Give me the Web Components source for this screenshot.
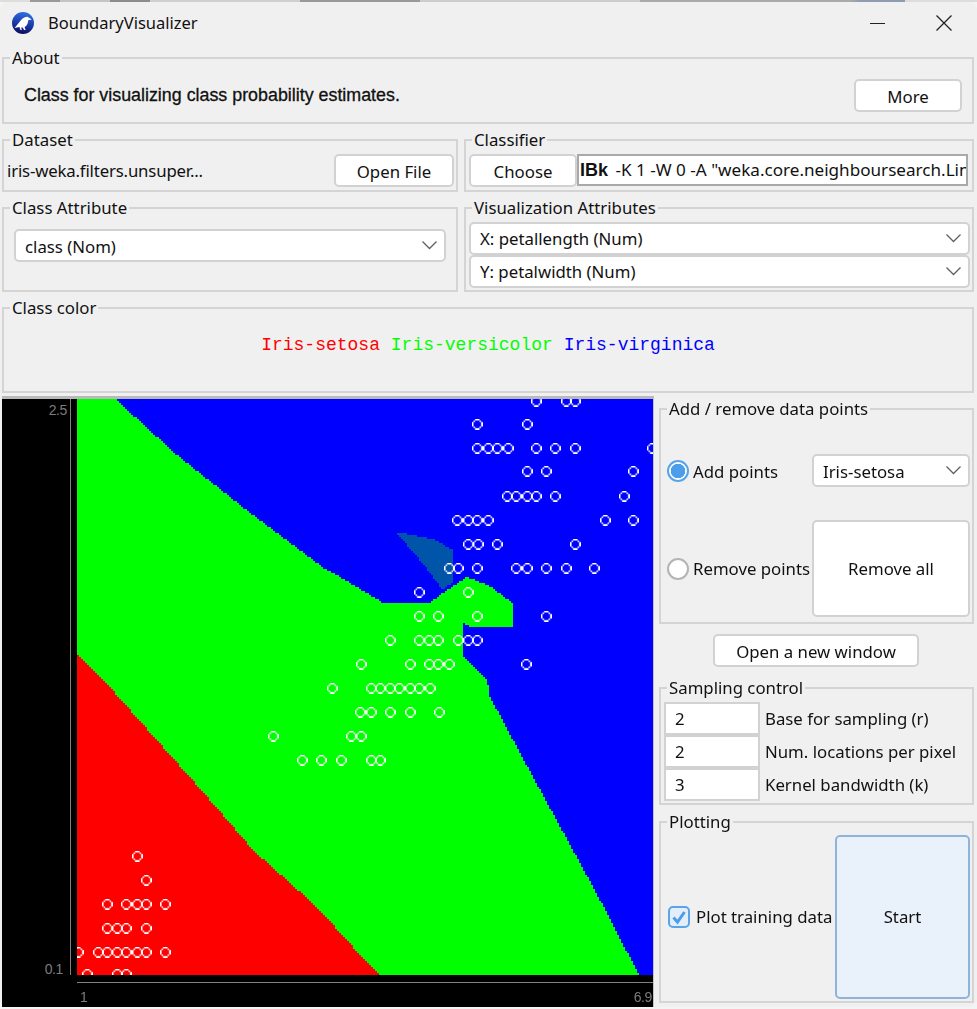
<!DOCTYPE html>
<html>
<head>
<meta charset="utf-8">
<title>BoundaryVisualizer</title>
<style>
html, body { margin: 0; background: #f4f4f4; }
body { width: 977px; height: 1009px; overflow: hidden; }
</style>
</head>
<body>
<boundary-visualizer></boundary-visualizer>
<script>
'use strict'

const chevron = `<svg width="15" height="9" viewBox="0 0 15 9"><polyline points="0.5,0.5 7.5,7.5 14.5,0.5" fill="none" stroke="#606060" stroke-width="1.3"/></svg>`

class WGroup extends HTMLElement {
  constructor() {
    super()
    this.attachShadow({mode: 'open'}).innerHTML = `
<style>
:host { display: block; box-sizing: border-box; }
fieldset { box-sizing: border-box; height: 100%; min-width: 0; margin: 0; padding: 0; border: 2px solid #d4d4d4; }
legend { margin-left: 6px; padding: 0 2px; line-height: 20px; height: 20px; color: #111; }
.b { box-sizing: border-box; padding: var(--p, 0); }
</style>
<fieldset><legend></legend><div class="b"><slot></slot></div></fieldset>`
    this.shadowRoot.querySelector('legend').textContent = this.getAttribute('label')
  }
}
customElements.define('w-group', WGroup)

class WButton extends HTMLElement {
  constructor() {
    super()
    this.attachShadow({mode: 'open'}).innerHTML = `
<style>
:host { display: flex; box-sizing: border-box; align-items: center; justify-content: center; height: 33px; padding-top: 2px;
  background: #fff; border: 2px solid #d2d2d2; border-radius: 5px; color: #111; white-space: nowrap; }
:host([active]) { background: #e9f1fa; border-color: #8fb4da; }
</style><slot></slot>`
  }
}
customElements.define('w-button', WButton)

class WCombo extends HTMLElement {
  constructor() {
    super()
    this.attachShadow({mode: 'open'}).innerHTML = `
<style>
:host { display: flex; box-sizing: border-box; align-items: center; justify-content: space-between; height: 33px;
  padding: 0 7px 0 9px; background: #fff; border: 2px solid #d2d2d2; border-radius: 5px; color: #111; white-space: nowrap; }
svg { display: block; }
span { position: relative; top: var(--nudge, 0); }
</style><span><slot></slot></span>${chevron}`
  }
}
customElements.define('w-combo', WCombo)

class WRadio extends HTMLElement {
  constructor() {
    super()
    this.attachShadow({mode: 'open'}).innerHTML = `
<style>
:host { display: flex; align-items: center; gap: 4px; color: #111; white-space: nowrap; }
i { box-sizing: border-box; width: 22px; height: 22px; border-radius: 50%; background: #fff; border: 2px solid #b4b4b4; flex: none; }
:host([checked]) i { border-color: #56a3ea; background: radial-gradient(circle, #4c9eea 0 7px, #fff 7.5px); }
:host([checked]) span { position: relative; top: 1px; }
</style><i></i><span><slot></slot></span>`
  }
}
customElements.define('w-radio', WRadio)

class WCheck extends HTMLElement {
  constructor() {
    super()
    this.attachShadow({mode: 'open'}).innerHTML = `
<style>
:host { display: flex; align-items: center; gap: 6px; color: #111; white-space: nowrap; }
svg { display: block; flex: none; }
</style>
<svg width="22" height="22" viewBox="0 0 22 22"><rect x="1" y="1" width="20" height="20" rx="4" fill="#e4eef9" stroke="#5ba4ea" stroke-width="2"/><polyline points="5.5,11.5 9.5,16 16.5,6" fill="none" stroke="#4c9eea" stroke-width="3"/></svg>
<span><slot></slot></span>`
  }
}
customElements.define('w-check', WCheck)

class WField extends HTMLElement {
  constructor() {
    super()
    this.attachShadow({mode: 'open'}).innerHTML = `
<style>
:host { display: flex; box-sizing: border-box; align-items: center; height: 33px; padding-left: 9px;
  background: #fff; border: 2px solid #d2d2d2; color: #111; }
</style><slot></slot>`
  }
}
customElements.define('w-field', WField)

class TitleBar extends HTMLElement {
  constructor() {
    super()
    this.attachShadow({mode: 'open'}).innerHTML = `
<style>
:host { display: flex; align-items: center; height: 42px; padding: 0 25px 0 12px; color: #111; }
svg { display: block; flex: none; }
.t { margin-left: 14px; font-size: 16.5px; }
.min { margin-left: auto; }
.x { margin-left: 51px; }
</style>
<svg width="22" height="22" viewBox="0 0 22 22">
  <defs><linearGradient id="g" x1="0.6" y1="0" x2="0.4" y2="1"><stop offset="0" stop-color="#2f6fe0"/><stop offset=".55" stop-color="#1a3aa8"/><stop offset="1" stop-color="#0b0b5c"/></linearGradient></defs>
  <circle cx="11" cy="11" r="11" fill="url(#g)"/>
  <path d="M2.5 16 L7.5 10 C9.5 7 12.5 4.5 15.5 4.8 L19.8 7.6 L16.2 8.2 C16.3 11 14.8 14 12.6 15 L13.6 18 L12.2 18 L10.6 15.6 L9.2 15.6 L9.8 18 L8.5 18 L7.4 15 Z" fill="#fff"/>
</svg>
<span class="t"><slot></slot></span>
<svg class="min" width="15" height="15" viewBox="0 0 15 15"><line x1="0" y1="7.5" x2="15" y2="7.5" stroke="#222" stroke-width="1"/></svg>
<svg class="x" width="16" height="16" viewBox="0 0 16 16"><path d="M.5 .5 L15.5 15.5 M15.5 .5 L.5 15.5" stroke="#222" stroke-width="1.3" fill="none"/></svg>`
  }
}
customElements.define('title-bar', TitleBar)

// plot data as read from the window, in screen pixels
const rows = [
  [401, [536, 566, 575]],
  [424, [477, 527]],
  [448, [477, 488, 497, 508, 536, 555, 575, 652]],
  [471, [527, 546, 633]],
  [496, [507, 516, 527, 536, 555, 624]],
  [520, [457, 468, 477, 488, 605, 633]],
  [544, [468, 478, 497, 575]],
  [568, [449, 458, 477, 516, 527, 546, 566, 594]],
  [592, [419, 468]],
  [616, [419, 438, 477, 546]],
  [640, [390, 419, 429, 438, 458, 468, 477]],
  [664, [361, 410, 429, 438, 449, 526]],
  [688, [332, 371, 380, 390, 399, 410, 419, 430]],
  [712, [360, 371, 390, 410, 439]],
  [736, [273, 351, 361]],
  [760, [302, 321, 341, 371, 380]],
  [856, [137]],
  [880, [146]],
  [904, [107, 126, 137, 146, 165]],
  [928, [107, 117, 126, 146]],
  [952, [78, 98, 107, 117, 126, 137, 146, 165]],
  [974, [87, 117, 126]]
]
const greenArea = [[77,399],[115,399],[177,455],[240,505],[322,567],[340,577],[383,603],[430,603],[440,595],[467,577],[490,586],[512,603],[513,627],[472,627],[463,623],[463,657],[487,680],[490,697],[520,753],[600,900],[639,975],[77,975]]
const redArea = [[77,653],[115,693],[210,800],[253,850],[317,907],[353,947],[379,975],[77,975]]
const patch = [[396,532],[433,539],[453,550],[453,582],[443,590],[420,560]]
const ring = ['..XXX..', '.X...X.', 'X.....X', 'X.....X', 'X.....X', '.X...X.', '..XXX..']

const inside = (pts, x, y) => {
  let hit = false
  for (let i = 0, j = pts.length - 1; i < pts.length; j = i++) {
    const [xi, yi] = pts[i], [xj, yj] = pts[j]
    if ((yi > y) !== (yj > y) && x < (xj - xi) * (y - yi) / (yj - yi) + xi) hit = !hit
  }
  return hit
}

class BoundaryPlot extends HTMLElement {
  constructor() {
    super()
    this.attachShadow({mode: 'open'}).innerHTML = `
<style>
:host { display: grid; box-sizing: border-box; grid-template-columns: 68px 1px 6px 576px; grid-template-rows: 576px 1fr;
  background: #000; border-top: 3px solid #b9b9b9; border-right: 1px solid #c4c4c4; color: #7c7c7c;
  font: 14px/14px "Liberation Sans", sans-serif; letter-spacing: -.4px; }
.y { display: flex; flex-direction: column; justify-content: space-between; text-align: right; padding: 4px 3px 0 0; }
.y span:last-child { padding-right: 4px; margin-bottom: -1px; }
.line { background: #828282; }
canvas { display: block; width: 576px; height: 576px; }
.axis { grid-column: 4; padding-top: 7px; }
.hl { height: 1px; background: #828282; }
.lab { display: flex; justify-content: space-between; padding: 7px 1px 0 3px; }
</style>
<div class="y"><span>2.5</span><span>0.1</span></div>
<div class="line"></div>
<div></div>
<canvas width="576" height="576"></canvas>
<div class="axis"><div class="hl"></div><div class="lab"><span>1</span><span>6.9</span></div></div>`
  }
  connectedCallback() {
    const c = this.shadowRoot.querySelector('canvas').getContext('2d')
    // crisp blocks for the regions, 2 screen px each
    for (let i = 0; i < 288; i++) {
      for (let j = 0; j < 288; j++) {
        const sx = 77 + (i + .5) * 2, sy = 399 + (j + .5) * 2
        let col = '#0000ff'
        if (inside(redArea, sx, sy)) col = '#ff0000'
        else if (inside(greenArea, sx, sy)) col = '#00ff00'
        else if (inside(patch, sx, sy)) col = '#0055a8'
        c.fillStyle = col
        c.fillRect(i * 2, j * 2, 2, 2)
      }
    }
    // one ring sprite, scaled up with smoothing like the 150% window
    const sprite = document.createElement('canvas')
    sprite.width = sprite.height = 7
    const s = sprite.getContext('2d')
    s.fillStyle = '#fff'
    ring.forEach((r, dy) => {
      for (let dx = 0; dx < 7; dx++) {
        if (r[dx] === 'X') s.fillRect(dx, dy, 1, 1)
      }
    })
    c.imageSmoothingEnabled = true
    for (const [y, xs] of rows) {
      for (const x of xs) {
        c.drawImage(sprite, x - 77 - 5, y - 399 - 5, 10.5, 10.5)
      }
    }
  }
}
customElements.define('boundary-plot', BoundaryPlot)

const appTemplate = document.createElement('template')
appTemplate.innerHTML = /*html*/`
<style>
:host { display: block; width: 977px; height: 1009px; font: 16.8px/24px "Noto Sans", sans-serif; color: #111;
  background: linear-gradient(90deg, #ddd 0 30px, #9a9a9a 30px 60px, #c4c4c4 60px 110px, #8c8c8c 110px 150px, #cfcfcf 150px 300px, #999 300px 420px, #ccc 420px 640px, #aaa 640px 850px, #8f9cb0 860px 905px, #ddd 905px) top / 100% 2px no-repeat #f4f4f4;
  overflow: hidden; }
.win { box-sizing: border-box; height: 1005px; margin-top: 2px; padding: 0 3px 0 2px; background: #f0f0f0; border-radius: 8px;
  display: flex; flex-direction: column; }
title-bar { margin: 0 -3px 4px -2px; }
.two { display: grid; grid-template-columns: 456px 510px; gap: 6px; margin-top: 6px; }
.about { height: 76px; --p: 11px 10px 0 20px; }
.about .in { display: flex; justify-content: space-between; }
.about .desc { font: 17.85px/32px "Liberation Sans", sans-serif; -webkit-text-stroke: .3px #111; color: #111; }
.about w-button { width: 108px; }
.ds { height: 62px; --p: 4px 2px 0 3px; }
.ds .in { display: flex; justify-content: space-between; align-items: center; }
.ds .in > span { letter-spacing: -.17px; }
.ds w-button { width: 120px; }
.cf { height: 62px; --p: 4px 4px 0 3px; }
.cf .in { display: flex; }
.cf w-button { width: 108px; flex: none; }
.scheme { box-sizing: border-box; flex: 1; min-width: 0; height: 32px; padding: 0 1px 0 1px; background: #fff; border: 2px solid #a9a9a9;
  overflow: hidden; white-space: nowrap; font-size: 17.1px; line-height: 28px; }
.scheme b { font: 700 18px/28px "Liberation Sans", sans-serif; margin-right: 3px; }
.ca { height: 94px; --p: 11px 10px 0 10px; --nudge: 1px; }
.va { height: 94px; --p: 4px 2px 0 3px; }
.cc { height: 95px; margin-top: 6px; --p: 15px 0 0 0; }
.cc .in { text-align: center; font: 18px/24px "Liberation Mono", monospace; }
.bottom { display: grid; grid-template-columns: 652px 315px; gap: 5px; margin-top: 3px; flex: 1; min-height: 0; }
.side { display: flex; flex-direction: column; padding-top: 3px; }
.ar { height: 225px; --p: 35px 2px 0 6px; --nudge: 1px; }
.ar .in { display: grid; grid-template-columns: 145px 158px; row-gap: 33px; }
.ar w-button { height: 97px; padding-top: 0; }
.side > w-button { width: 206px; margin: 10px 0 11px 54px; }
.sc { height: 127px; --p: 4px 3px 0 3px; }
.sc .in { display: grid; grid-template-columns: 96px 1fr; column-gap: 5px; grid-auto-rows: 33px; align-items: center; white-space: nowrap; }
.pl { height: 191px; margin-top: 7px; --p: 3px 2px 0 7px; }
.pl .in { display: flex; align-items: center; justify-content: space-between; }
.pl w-button { width: 135px; height: 164px; padding-top: 0; }
</style>
<div class="win">
  <title-bar>BoundaryVisualizer</title-bar>
  <w-group class="about" label="About"><div class="in">
    <span class="desc">Class for visualizing class probability estimates.</span><w-button>More</w-button>
  </div></w-group>
  <div class="two">
    <w-group class="ds" label="Dataset"><div class="in"><span>iris-weka.filters.unsuper...</span><w-button>Open File</w-button></div></w-group>
    <w-group class="cf" label="Classifier"><div class="in"><w-button>Choose</w-button><div class="scheme"><b>IBk</b> -K 1 -W 0 -A "weka.core.neighboursearch.LinearNNSearch</div></div></w-group>
  </div>
  <div class="two">
    <w-group class="ca" label="Class Attribute"><w-combo>class (Nom)</w-combo></w-group>
    <w-group class="va" label="Visualization Attributes"><w-combo>X: petallength (Num)</w-combo><w-combo>Y: petalwidth (Num)</w-combo></w-group>
  </div>
  <w-group class="cc" label="Class color"><div class="in"><span style="color:#f00">Iris-setosa</span> <span style="color:#0f0">Iris-versicolor</span> <span style="color:#00f">Iris-virginica</span></div></w-group>
  <div class="bottom">
    <boundary-plot></boundary-plot>
    <div class="side">
      <w-group class="ar" label="Add / remove data points"><div class="in">
        <w-radio checked>Add points</w-radio><w-combo>Iris-setosa</w-combo>
        <w-radio>Remove points</w-radio><w-button>Remove all</w-button>
      </div></w-group>
      <w-button>Open a new window</w-button>
      <w-group class="sc" label="Sampling control"><div class="in">
        <w-field>2</w-field><span>Base for sampling (r)</span>
        <w-field>2</w-field><span>Num. locations per pixel</span>
        <w-field>3</w-field><span>Kernel bandwidth (k)</span>
      </div></w-group>
      <w-group class="pl" label="Plotting"><div class="in">
        <w-check>Plot training data</w-check><w-button active>Start</w-button>
      </div></w-group>
    </div>
  </div>
</div>`

class BoundaryVisualizer extends HTMLElement {
  constructor() {
    super()
    this.attachShadow({mode: 'open'}).appendChild(appTemplate.content.cloneNode(true))
  }
}
customElements.define('boundary-visualizer', BoundaryVisualizer)
</script>
</body>
</html>
